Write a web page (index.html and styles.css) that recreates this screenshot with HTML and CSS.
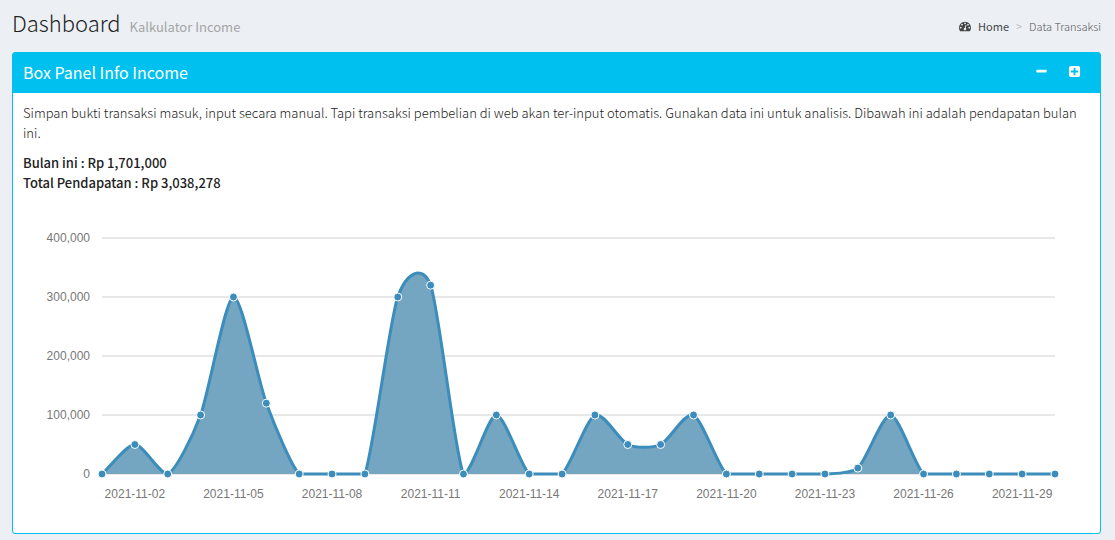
FILE: index.html
```html
<!DOCTYPE html>
<html lang="id">
<head>
<meta charset="utf-8">
<title>Dashboard</title>
<link rel="stylesheet" href="styles.css">
</head>
<body>
<header class="content-header">
  <h1 class="page-title">Dashboard <small class="subtitle">Kalkulator Income</small></h1>
  <nav aria-label="Breadcrumb">
    <ol class="breadcrumb">
      <li><a class="home" href="#"><svg class="icon-dashboard" viewBox="0 0 1792 1792" aria-hidden="true"><path d="M384 1152q0-53-37.5-90.5t-90.5-37.5-90.5 37.5-37.5 90.5 37.5 90.5 90.5 37.5 90.5-37.5 37.5-90.5zm192-448q0-53-37.5-90.5t-90.5-37.5-90.5 37.5-37.5 90.5 37.5 90.5 90.5 37.5 90.5-37.5 37.5-90.5zm428 481l101-382q6-26-7.5-48.5t-38.5-29.5-48 6.5-30 39.5l-101 382q-60 5-107 43.5t-63 98.5q-20 77 20 146t117 89 146-20 89-117q16-60-6-117t-72-91zm660-33q0-53-37.5-90.5t-90.5-37.5-90.5 37.5-37.5 90.5 37.5 90.5 90.5 37.5 90.5-37.5 37.5-90.5zm-640-640q0-53-37.5-90.5t-90.5-37.5-90.5 37.5-37.5 90.5 37.5 90.5 90.5 37.5 90.5-37.5 37.5-90.5zm448 192q0-53-37.5-90.5t-90.5-37.5-90.5 37.5-37.5 90.5 37.5 90.5 90.5 37.5 90.5-37.5 37.5-90.5zm320 448q0 261-141 483-19 29-54 29h-1402q-35 0-54-29-141-221-141-483 0-182 71-348t191-286 286-191 348-71 348 71 286 191 191 286 71 348z"/></svg>Home</a></li>
      <li class="separator" aria-hidden="true">&gt;</li>
      <li class="current">Data Transaksi</li>
    </ol>
  </nav>
</header>
<main class="box">
  <div class="box-header">
    <h2 class="box-title">Box Panel Info Income</h2>
    <div class="box-tools">
      <button class="tool" type="button" aria-label="Collapse"><svg class="icon-tool" viewBox="0 0 1792 1792"><path d="M1600 736v192q0 40-28 68t-68 28h-1216q-40 0-68-28t-28-68v-192q0-40 28-68t68-28h1216q40 0 68 28t28 68z"/></svg></button>
      <button class="tool" type="button" aria-label="Add"><svg class="icon-tool" viewBox="0 0 1792 1792"><path d="M1408 960v-128q0-26-19-45t-45-19h-320v-320q0-26-19-45t-45-19h-128q-26 0-45 19t-19 45v320h-320q-26 0-45 19t-19 45v128q0 26 19 45t45 19h320v320q0 26 19 45t45 19h128q26 0 45-19t19-45v-320h320q26 0 45-19t19-45zm256-544v960q0 119-84.5 203.5t-203.5 84.5h-960q-119 0-203.5-84.5t-84.5-203.5v-960q0-119 84.5-203.5t203.5-84.5h960q119 0 203.5 84.5t84.5 203.5z"/></svg></button>
    </div>
  </div>
  <div class="box-body">
    <p class="intro">Simpan bukti transaksi masuk, input secara manual. Tapi transaksi pembelian di web akan ter-input otomatis. Gunakan data ini untuk analisis. Dibawah ini adalah pendapatan bulan ini.</p>
    <p class="totals"><strong>Bulan ini : Rp 1,701,000<br>Total Pendapatan : Rp 3,038,278</strong></p>
    <svg class="chart" id="income-chart" role="img" aria-label="Pendapatan harian November 2021"></svg>
  </div>
</main>
<script src="chart.js"></script>
</body>
</html>
```
FILE: styles.css
```css
* { box-sizing: border-box; }

body {
  margin: 0;
  padding: 8px 14px 6px 12px;
  background: #ecf0f5;
  color: #333;
  font-family: "Noto Sans CJK JP", "Open Sans", sans-serif;
  font-size: 13px;
  line-height: 20px;
}

.content-header {
  display: flex;
  justify-content: space-between;
  align-items: center;
  height: 32px;
  margin-bottom: 12px;
}

.page-title {
  margin: 0;
  color: #222;
  font-size: 22px;
  font-weight: 300;
  line-height: 32px;
}

.subtitle {
  margin-left: 4px;
  color: #a4a4a4;
  font-size: 13px;
  font-weight: 400;
}

.breadcrumb {
  display: flex;
  align-items: center;
  margin: 0;
  padding: 4px 0 0;
  list-style: none;
  font-size: 11px;
}

.home {
  display: flex;
  align-items: center;
  gap: 7px;
  color: #444;
  text-decoration: none;
}

.icon-dashboard {
  width: 12px;
  height: 12px;
  fill: #444;
}

.separator { padding: 0 7px; color: #bbb; }
.current { color: #555; font-weight: 300; }

.box {
  border: 1px solid #00c0ef;
  border-radius: 3px;
  background: #fff;
}

.box-header {
  display: flex;
  justify-content: space-between;
  align-items: center;
  height: 40px;
  padding: 0 9px 3px 10px;
  background: #00c0ef;
  color: #fff;
}

.box-title {
  margin: 0;
  font-size: 16px;
  font-weight: 400;
}

.box-tools { display: flex; }

.tool {
  display: flex;
  justify-content: center;
  align-items: center;
  width: 33px;
  height: 30px;
  padding: 0;
  border: 0;
  background: transparent;
}

.icon-tool {
  width: 13px;
  height: 13px;
  fill: #fff;
}

.box-body { padding: 10px; }
.intro, .totals { margin: 0 0 10px; }
.intro { font-weight: 300; color: #222; }
.totals strong { font-weight: 500; color: #222; }

.chart {
  display: block;
  width: 100%;
  height: 320px;
}

.grid-line { stroke: #e8e8e8; stroke-width: 2; }

.axis-label {
  fill: #777;
  font-family: "Liberation Sans", Arial, sans-serif;
  font-size: 12px;
}

.area { fill: #74a5c1; }
.line { fill: none; stroke: #3c8dbc; stroke-width: 3; }
.point { fill: #3c8dbc; stroke: #fff; stroke-width: 1; }
```
FILE: chart.js
```js
const income = [
  0, 50000, 0, 100000, 300000, 120000, 0, 0, 0, 300000,
  320000, 0, 100000, 0, 0, 100000, 50000, 50000, 100000, 0,
  0, 0, 0, 10000, 100000, 0, 0, 0, 0, 0
];
const svg = document.getElementById("income-chart");
const plot = { left: 79, right: 35, top: 35, bottom: 271 };
const maxValue = 400000;

function add(name, attributes, text) {
  const node = document.createElementNS("http://www.w3.org/2000/svg", name);
  for (const key in attributes) node.setAttribute(key, attributes[key]);
  if (text) node.textContent = text;
  svg.appendChild(node);
}

function slope(a, b) {
  return (b.y - a.y) / (b.x - a.x);
}

// Cubic segments whose tangents follow the neighbouring points.
function smoothPath(points) {
  const last = points.length - 1;
  const slopes = points.map((p, i) =>
    slope(points[Math.max(i - 1, 0)], points[Math.min(i + 1, last)]));
  let path = `M${points[0].x},${points[0].y}`;
  for (let i = 1; i <= last; i++) {
    const a = points[i - 1];
    const b = points[i];
    const dx = (b.x - a.x) / 4;
    const y1 = Math.min(plot.bottom, a.y + dx * slopes[i - 1]);
    const y2 = Math.min(plot.bottom, b.y - dx * slopes[i]);
    path += `C${a.x + dx},${y1},${b.x - dx},${y2},${b.x},${b.y}`;
  }
  return path;
}

function draw() {
  svg.replaceChildren();
  const right = svg.clientWidth - plot.right;
  const height = plot.bottom - plot.top;
  const step = (right - plot.left) / (income.length - 1);
  const points = income.map((value, i) => ({
    x: plot.left + i * step,
    y: plot.bottom - value / maxValue * height
  }));

  for (let value = 0; value <= maxValue; value += 100000) {
    const y = plot.bottom - value / maxValue * height;
    add("line", { class: "grid-line", x1: plot.left, x2: right, y1: y, y2: y });
    add("text", { class: "axis-label", x: plot.left - 12, y: y + 4, "text-anchor": "end" },
      value.toLocaleString("en-US"));
  }
  for (let i = 1; i < income.length; i += 3) {
    add("text", { class: "axis-label", x: points[i].x, y: plot.bottom + 24, "text-anchor": "middle" },
      "2021-11-" + String(i + 1).padStart(2, "0"));
  }

  const path = smoothPath(points);
  add("path", { class: "area", d: `${path}L${right},${plot.bottom}L${plot.left},${plot.bottom}Z` });
  add("path", { class: "line", d: path });
  for (const p of points) add("circle", { class: "point", cx: p.x, cy: p.y, r: 4 });
}

draw();
window.addEventListener("resize", draw);
```
